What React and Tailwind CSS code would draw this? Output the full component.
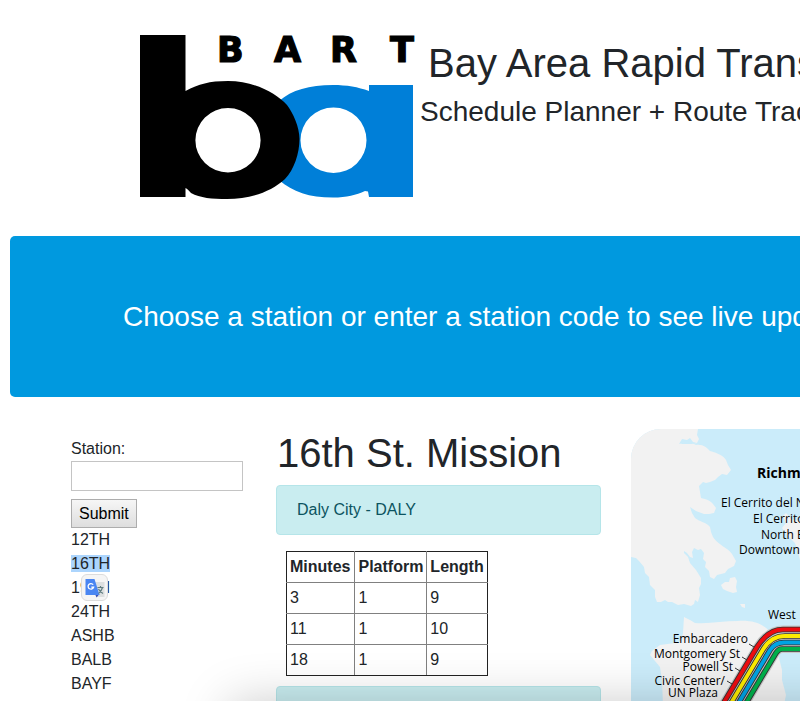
import React from "react";

const STATIONS = ["12TH", "16TH", "19TH", "24TH", "ASHB", "BALB", "BAYF", "CAST"];

const DEPARTURES = [
  [3, 1, 9],
  [11, 1, 10],
  [18, 1, 9],
];

function BartLogo() {
  return (
    <svg viewBox="139 34 277 166" className="w-[277px] h-[166px] shrink-0" role="img" aria-label="BART">
      <path
        fill="#007fd8"
        fillRule="evenodd"
        d="M369 85H413V197H369L368 191.500L365 191C356 195 347 197.500 333 197.500C309 197.500 293 192 279 180L279 101C292 90 309 85 333 85C347 85 358 87 369 91ZM333.500 107.500A33 32.750 0 1 0 333.500 173A33 32.750 0 1 0 333.500 107.500Z"
      />
      <path
        d="M140 35H185.500V91C199 84 209 81 228 81C254 81 276 93 287 105C293 113 299.500 127 299.500 139C299.500 153 294 170 285 179C271 192 250 199 227 199C212 199 200 198 191 193C189 191 188 189 185.500 188V197H140ZM228 108A32.600 32.250 0 1 0 228 172.500A32.600 32.250 0 1 0 228 108Z"
        fillRule="evenodd"
        fill="#000"
      />
      <text
        x="217 274 330 390"
        y="62"
        fontSize="35"
        fontWeight="700"
        stroke="#000"
        strokeWidth="1.200"
        style={{ fontFamily: '"DejaVu Sans", sans-serif' }}
      >
        BART
      </text>
    </svg>
  );
}

const LINES = [
  { color: "#ee0c10", d: "M720 709L757 647Q768 629.500 783 629.500H810" },
  { color: "#fdec00", d: "M727.500 709L763 649.500Q771 636 785 636H810" },
  { color: "#00a4e4", d: "M735 709L770 650Q775 642.500 784 642.500H810" },
  { color: "#00b04b", d: "M742.500 709L776 653Q778.500 649 782 649H810" },
];

function SystemMap() {
  return (
    <svg
      viewBox="631 429 169 272"
      className="w-full h-auto rounded-tl-[30px] bg-[#cbecfa]"
      role="img"
      aria-label="BART system map"
      style={{ fontFamily: '"Open Sans", "Noto Sans", sans-serif' }}
    >
      <g fill="#f2f2f2">
        <path d="M631 429H698L697 435L699 439L697 443L694 444L686 441L680 444L694 444L696 445C703 444 707 448 710 451C717 453 723 455 726 460L728 465L731 470L727 475L722 474L718 477L715 480L710 482L706 483L703 482L699 486L700 492L701 498C706 499 711 501 713 504L716 508L714 513L709 514L704 514L696 511L690 507L692 513L695 518C700 522 706 522 710 527L711 532L713 537C718 545 727 547 732 554L736 561L734 566L728 569L725 573L717 575L714 579L710 577L709 571L705 567L706 562L703 559L704 553L701 549L698 550L694 548L692 552L693 558L690 557L687 553L684 551L684 553L688 557L690 563L696 570L701 578L701 584L699 588L700 595L698 602L695 600L694 604L691 606L684 604L678 605L672 602L668 602L665 600L661 602L657 602L655 597L655 590L650 585L649 577L645 573L644 567L639 561L636 558L631 557Z" />
        <path d="M721 585L725 582L729 582L730 578L735 577L737 581L736 587L737 592L733 593L727 591L723 589Z" />
        <path d="M740 604L745 604L745 608L742 607Z" />
        <path d="M684 617L690 620L695 623C710 624 723 621 738 621C753 620 763 624 769 631L777 650L782 670L782 680L786 695L784 705H663L662 680L660 667L650 655L652 651L660 645L675 643L681 641L683 633Z" />
        <path d="M800 521L791 519L786 513L783 516L786 523L782 528L788 536L795 543L798 552L800 560Z" />
      </g>
      <path d="M679 444L682 439L687 440L690 438L693 442L697 443L694 444L686 442Z" fill="#cbecfa" />
      <g fill="none">
        <g stroke="#c8c8c8" strokeWidth="8">
          {LINES.map((l) => <path key={l.color} d={l.d} />)}
        </g>
        <g stroke="#333" strokeWidth="5.6">
          {LINES.map((l) => <path key={l.color} d={l.d} />)}
        </g>
        {LINES.map((l) => <path key={l.color} d={l.d} stroke={l.color} strokeWidth="3.8" />)}
        <path d="M749 644L754 647M742 657L747 660M735 668L740 671M727 681L732 684" stroke="#333" />
      </g>
      <text x="757" y="478" fontSize="14" fontWeight="700">Richmond</text>
      <g fontSize="12">
        <text x="721" y="507">El Cerrito del Norte</text>
        <text x="753" y="523">El Cerrito Plaza</text>
        <text x="761" y="539">North Berkeley</text>
        <text x="739" y="554">Downtown Berkeley</text>
        <text x="768" y="619">West</text>
        <g textAnchor="end">
          <text x="748" y="643">Embarcadero</text>
          <text x="740" y="658">Montgomery St</text>
          <text x="733" y="671">Powell St</text>
          <text x="725" y="685">Civic Center/</text>
          <text x="718" y="697">UN Plaza</text>
        </g>
      </g>
    </svg>
  );
}

function TranslateBadge() {
  return (
    <button
      type="button"
      aria-label="Translate selection"
      className="absolute left-[10px] top-[-2px] flex size-[27px] items-center justify-center rounded-md border border-[#dcdcdc] bg-[#f5f5f5]"
    >
      <svg viewBox="0 0 20 20" className="size-5">
        <path d="M7 4H19.500V19H12Z" fill="#dcdfe0" />
        <path d="M10 16H14.500L11.500 19.500Z" fill="#3a50b5" />
        <path d="M0.500 1H9.500L14.500 17H0.500Z" fill="#4a86f2" />
        <path d="M8.200 6.700A2.800 2.800 0 1 0 8.600 9.200H6.300" fill="none" stroke="#fff" strokeWidth="1.300" />
        <path d="M12.500 9.500H18.500M15.500 8V9.500M17.500 9.500C16.500 13 14.500 14.500 13.500 15.500M13.500 11C14.500 13 16 14.500 18 15.500" fill="none" stroke="#607d80" strokeWidth="1.200" />
      </svg>
    </button>
  );
}

function StationPicker() {
  return (
    <aside className="w-[205px] shrink-0 pt-2">
      <form onSubmit={(e) => e.preventDefault()}>
        <label htmlFor="station" className="block">Station:</label>
        <input id="station" type="text" className="block h-[30px] w-[172px] border border-[#c4c4c4] bg-white px-1" />
        <button
          type="submit"
          className="mt-2 block h-[29px] border border-[#adadad] bg-linear-to-b from-[#f6f6f6] to-[#dedede] px-[7px] leading-6 text-black"
        >
          Submit
        </button>
      </form>
      <ul>
        {STATIONS.map((code) => (
          <li key={code} className="relative">
            <span className={code === "16TH" ? "bg-[#acd5fd]" : ""}>{code}</span>
            {code === "19TH" && <TranslateBadge />}
          </li>
        ))}
      </ul>
    </aside>
  );
}

function RouteAlert({ children }) {
  return (
    <div className="mb-4 min-h-[50px] rounded border border-[#b5e5e9] bg-[#c9edf0] px-5 py-3 text-[#0c5460]">
      {children}
    </div>
  );
}

const CELL =
  "border border-[#808080] p-[3px] first:border-l-[#222] last:border-r-[#222] first:pr-1";

export default function App() {
  return (
    <div
      className="h-screen overflow-hidden bg-white text-base leading-6 text-[#212529]"
      style={{ fontFamily: '"Liberation Sans", Arial, sans-serif' }}
    >
      <header className="flex pl-[139px] pt-[34px] whitespace-nowrap">
        <BartLogo />
        <div className="pl-1 pt-[5px]">
          <h1 className="mb-2 pl-2 text-[40px] leading-[48px]">Bay Area Rapid Transit</h1>
          <h3 className="text-[28px] leading-[34px]">Schedule Planner + Route Tracker</h3>
        </div>
      </header>

      <section className="ml-[10px] mt-9 rounded-l-[5px] bg-[#0099df] py-16 pl-[113px] text-white">
        <h3 className="whitespace-nowrap text-[28px] leading-[33px]">
          Choose a station or enter a station code to see live updates
        </h3>
      </section>

      <main className="mt-8 flex items-start pl-[71px]">
        <StationPicker />
        <section className="w-[325px] shrink-0">
          <h1 className="mb-2 pl-px text-[40px] leading-[48px]">16th St. Mission</h1>
          <RouteAlert>Daly City - DALY</RouteAlert>
          <table className="mb-[10px] ml-[10px] border-collapse text-left">
            <thead>
              <tr>
                {["Minutes", "Platform", "Length"].map((h) => (
                  <th key={h} className={`${CELL} border-t-[#222] font-bold`}>{h}</th>
                ))}
              </tr>
            </thead>
            <tbody>
              {DEPARTURES.map((row, r) => (
                <tr key={row[0]}>
                  {row.map((v, i) => (
                    <td key={i} className={r === DEPARTURES.length - 1 ? `${CELL} border-b-[#222]` : CELL}>{v}</td>
                  ))}
                </tr>
              ))}
            </tbody>
          </table>
          <RouteAlert />
        </section>
        <section className="ml-[30px] min-w-0 flex-1">
          <SystemMap />
        </section>
      </main>

      <div className="pointer-events-none fixed -right-20 left-[230px] top-full h-20 shadow-[0_2px_50px_rgba(0,0,0,0.22)]" />
    </div>
  );
}
